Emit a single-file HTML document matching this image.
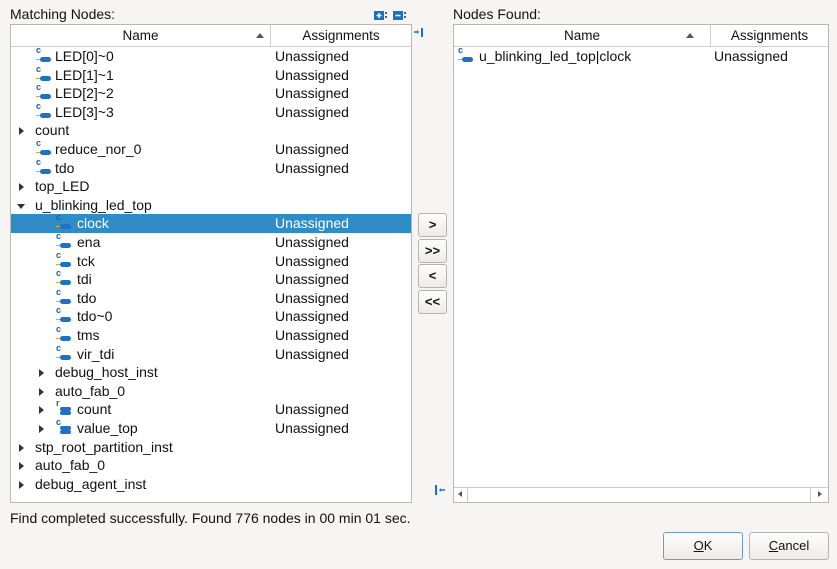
<!DOCTYPE html>
<html><head><meta charset="utf-8"><style>
*{box-sizing:border-box;margin:0;padding:0}
body{width:837px;height:569px;background:#f6f5f4;font-family:"Liberation Sans",sans-serif;font-size:14px;color:#111;position:relative;overflow:hidden}
.abs{position:absolute}
.box{position:absolute;background:#fff;border:1px solid #b9b8b6}
.hdr{position:absolute;top:0;height:22px;border-bottom:1px solid #cfcecc;background:#fff;line-height:21px;text-align:center;font-size:13.5px}
.row{position:absolute;left:0;height:18.6px;line-height:18.6px;white-space:nowrap}
.sel{background:#308cc6;color:#fff}
.arr{position:absolute;top:6px;width:0;height:0;border-top:4px solid transparent;border-bottom:4px solid transparent;border-left:5px solid #333}
.arrd{position:absolute;top:8px;width:0;height:0;border-left:4px solid transparent;border-right:4px solid transparent;border-top:5px solid #333}
.ic{position:absolute;top:0;width:18px;height:18px}
.ic b{position:absolute;left:1px;top:-6px;font-size:9px;color:#1c5fa8;font-weight:bold;font-family:"Liberation Sans",sans-serif}
.ic i{position:absolute;left:1px;top:12px;width:6px;height:1px;background:#e8a23a}
.ic u{position:absolute;left:5px;top:10px;width:11px;height:5px;border-radius:3px;background:#1f70c1}
.as{position:absolute;left:264px}
.btn{position:absolute;background:linear-gradient(#fdfdfd,#ecebea);border:1px solid #b4b3b1;border-radius:3px;text-align:center;font-size:13px;font-weight:bold}
</style></head><body>
<div class="abs" style="left:10px;top:6px">Matching Nodes:</div>
<div class="abs" style="left:453px;top:6px">Nodes Found:</div>
<svg class="abs" style="left:374px;top:11px" width="34" height="10"><rect x="0" y="0" width="10" height="9" fill="#1f6fc0"/><path d="M5 2v5M2.5 4.5h5" stroke="#fff" stroke-width="1.5"/><rect x="11" y="1" width="2" height="2" fill="#1f6fc0"/><rect x="11" y="5" width="2" height="2" fill="#1f6fc0"/><rect x="19" y="0" width="10" height="9" fill="#1f6fc0"/><path d="M21.5 4.5h5" stroke="#fff" stroke-width="1.5"/><rect x="30" y="1" width="2" height="2" fill="#1f6fc0"/><rect x="30" y="5" width="2" height="2" fill="#1f6fc0"/></svg>
<svg class="abs" style="left:413px;top:27px" width="12" height="12"><path d="M1 5h4" stroke="#1f6fc0" stroke-width="1.5"/><path d="M4 3l2 2-2 2z" fill="#1f6fc0"/><rect x="8" y="1" width="2" height="9" fill="#1f6fc0"/></svg>
<svg class="abs" style="left:434px;top:484px" width="12" height="12"><rect x="1" y="1" width="2" height="10" fill="#1f6fc0"/><path d="M6 6h5" stroke="#1f6fc0" stroke-width="1.5"/><path d="M7 4l-2 2 2 2z" fill="#1f6fc0"/></svg>

<div class="box" style="left:10px;top:24px;width:402px;height:479px">
<div class="hdr" style="left:0;width:260px;border-right:1px solid #cfcecc">Name<span class="abs" style="right:6px;top:8px;border-left:4px solid transparent;border-right:4px solid transparent;border-bottom:5px solid #555"></span></div>
<div class="hdr" style="left:260px;width:140px">Assignments</div>
<div style="position:absolute;left:0;top:22px;width:400px">
<div class="row" style="top:0;width:400px"><span class="ic" style="left:24px"><b>c</b><i></i><u></u></span><span class="abs" style="left:44px">LED[0]~0</span><span class="as">Unassigned</span></div>
<div class="row" style="top:18.6px;width:400px"><span class="ic" style="left:24px"><b>c</b><i></i><u></u></span><span class="abs" style="left:44px">LED[1]~1</span><span class="as">Unassigned</span></div>
<div class="row" style="top:37.2px;width:400px"><span class="ic" style="left:24px"><b>c</b><i></i><u></u></span><span class="abs" style="left:44px">LED[2]~2</span><span class="as">Unassigned</span></div>
<div class="row" style="top:55.8px;width:400px"><span class="ic" style="left:24px"><b>c</b><i></i><u></u></span><span class="abs" style="left:44px">LED[3]~3</span><span class="as">Unassigned</span></div>
<div class="row" style="top:74.4px;width:400px"><span class="arr" style="left:8px"></span><span class="abs" style="left:24px">count</span></div>
<div class="row" style="top:93px;width:400px"><span class="ic" style="left:24px"><b>c</b><i></i><u></u></span><span class="abs" style="left:44px">reduce_nor_0</span><span class="as">Unassigned</span></div>
<div class="row" style="top:111.6px;width:400px"><span class="ic" style="left:24px"><b>c</b><i></i><u></u></span><span class="abs" style="left:44px">tdo</span><span class="as">Unassigned</span></div>
<div class="row" style="top:130.2px;width:400px"><span class="arr" style="left:8px"></span><span class="abs" style="left:24px">top_LED</span></div>
<div class="row" style="top:148.8px;width:400px"><span class="arrd" style="left:6px"></span><span class="abs" style="left:24px">u_blinking_led_top</span></div>
<div class="row sel" style="top:167.4px;width:400px"><span class="ic" style="left:44px"><b>c</b><i></i><u></u></span><span class="abs" style="left:66px">clock</span><span class="as">Unassigned</span></div>
<div class="row" style="top:186px;width:400px"><span class="ic" style="left:44px"><b>c</b><i></i><u></u></span><span class="abs" style="left:66px">ena</span><span class="as">Unassigned</span></div>
<div class="row" style="top:204.6px;width:400px"><span class="ic" style="left:44px"><b>c</b><i></i><u></u></span><span class="abs" style="left:66px">tck</span><span class="as">Unassigned</span></div>
<div class="row" style="top:223.2px;width:400px"><span class="ic" style="left:44px"><b>c</b><i></i><u></u></span><span class="abs" style="left:66px">tdi</span><span class="as">Unassigned</span></div>
<div class="row" style="top:241.8px;width:400px"><span class="ic" style="left:44px"><b>c</b><i></i><u></u></span><span class="abs" style="left:66px">tdo</span><span class="as">Unassigned</span></div>
<div class="row" style="top:260.4px;width:400px"><span class="ic" style="left:44px"><b>c</b><i></i><u></u></span><span class="abs" style="left:66px">tdo~0</span><span class="as">Unassigned</span></div>
<div class="row" style="top:279px;width:400px"><span class="ic" style="left:44px"><b>c</b><i></i><u></u></span><span class="abs" style="left:66px">tms</span><span class="as">Unassigned</span></div>
<div class="row" style="top:297.6px;width:400px"><span class="ic" style="left:44px"><b>c</b><i></i><u></u></span><span class="abs" style="left:66px">vir_tdi</span><span class="as">Unassigned</span></div>
<div class="row" style="top:316.2px;width:400px"><span class="arr" style="left:28px"></span><span class="abs" style="left:44px">debug_host_inst</span></div>
<div class="row" style="top:334.8px;width:400px"><span class="arr" style="left:28px"></span><span class="abs" style="left:44px">auto_fab_0</span></div>
<div class="row" style="top:353.4px;width:400px"><span class="arr" style="left:28px"></span><span class="ic" style="left:44px"><b>r</b><u style="top:7px;height:4px"></u><u style="top:11px;height:4px"></u></span><span class="abs" style="left:66px">count</span><span class="as">Unassigned</span></div>
<div class="row" style="top:372px;width:400px"><span class="arr" style="left:28px"></span><span class="ic" style="left:44px"><b>c</b><u style="top:7px;height:4px"></u><u style="top:11px;height:4px"></u></span><span class="abs" style="left:66px">value_top</span><span class="as">Unassigned</span></div>
<div class="row" style="top:390.6px;width:400px"><span class="arr" style="left:8px"></span><span class="abs" style="left:24px">stp_root_partition_inst</span></div>
<div class="row" style="top:409.2px;width:400px"><span class="arr" style="left:8px"></span><span class="abs" style="left:24px">auto_fab_0</span></div>
<div class="row" style="top:427.8px;width:400px"><span class="arr" style="left:8px"></span><span class="abs" style="left:24px">debug_agent_inst</span></div>
</div></div>

<div class="btn" style="left:418px;top:213px;width:29px;height:24px;line-height:22px">&gt;</div>
<div class="btn" style="left:418px;top:239px;width:29px;height:24px;line-height:22px">&gt;&gt;</div>
<div class="btn" style="left:418px;top:264px;width:29px;height:24px;line-height:22px">&lt;</div>
<div class="btn" style="left:418px;top:290px;width:29px;height:24px;line-height:22px">&lt;&lt;</div>

<div class="box" style="left:453px;top:24px;width:376px;height:479px">
<div class="hdr" style="left:0;width:257px;border-right:1px solid #cfcecc">Name<span class="abs" style="right:16px;top:8px;border-left:4px solid transparent;border-right:4px solid transparent;border-bottom:5px solid #555"></span></div>
<div class="hdr" style="left:257px;width:117px">Assignments</div>
<div class="row" style="top:22px;width:374px"><span class="ic" style="left:3px"><b>c</b><i></i><u></u></span><span class="abs" style="left:25px">u_blinking_led_top|clock</span><span class="abs" style="left:260px">Unassigned</span></div>
<div class="abs" style="left:0;top:462px;width:374px;height:15px;border-top:1px solid #cfcecc;background:#fff">
<span class="abs" style="left:4px;top:3px;border-top:3px solid transparent;border-bottom:3px solid transparent;border-right:4px solid #555"></span>
<span class="abs" style="left:13px;top:0;width:1px;height:14px;background:#cfcecc"></span>
<span class="abs" style="left:356px;top:0;width:1px;height:14px;background:#cfcecc"></span>
<span class="abs" style="left:364px;top:3px;border-top:3px solid transparent;border-bottom:3px solid transparent;border-left:4px solid #555"></span>
</div></div>

<div class="abs" style="left:10px;top:510px">Find completed successfully. Found 776 nodes in 00 min 01 sec.</div>
<div class="btn" style="left:663px;top:532px;width:80px;height:28px;line-height:26px;font-weight:normal;border-color:#6d9ac6"><u>O</u>K</div>
<div class="btn" style="left:749px;top:532px;width:80px;height:28px;line-height:26px;font-weight:normal"><u>C</u>ancel</div>
</body></html>
